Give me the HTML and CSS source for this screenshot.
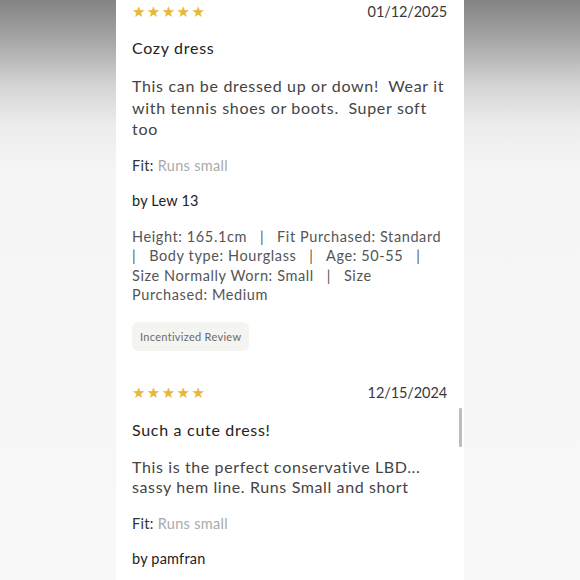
FILE: index.html
```html
<!DOCTYPE html>
<html>
<head>
<meta charset="utf-8">
<link rel="stylesheet" href="styles.css">
</head>
<body>
<div class="page">
  <div class="panel">
    <div class="review">
      <div class="head">
        <span class="stars">★★★★★</span>
        <span class="date">01/12/2025</span>
      </div>
      <div class="title">Cozy dress</div>
      <div class="text">This can be dressed up or down!&nbsp; Wear it<br>with tennis shoes or boots.&nbsp; Super soft<br>too</div>
      <div class="fit"><span class="fit-label">Fit:</span> <span class="fit-value">Runs small</span></div>
      <div class="by">by Lew 13</div>
      <div class="details">Height: 165.1cm &nbsp; | &nbsp; Fit Purchased: Standard<br>| &nbsp; Body type: Hourglass &nbsp; | &nbsp; Age: 50-55 &nbsp; |<br>Size Normally Worn: Small &nbsp; | &nbsp; Size<br>Purchased: Medium</div>
      <div class="badge">Incentivized Review</div>
    </div>
    <div class="review second">
      <div class="head">
        <span class="stars">★★★★★</span>
        <span class="date">12/15/2024</span>
      </div>
      <div class="title">Such a cute dress!</div>
      <div class="text two">This is the perfect conservative LBD...<br>sassy hem line. Runs Small and short</div>
      <div class="fit"><span class="fit-label">Fit:</span> <span class="fit-value">Runs small</span></div>
      <div class="by">by pamfran</div>
    </div>
    <div class="scrollbar"></div>
  </div>
</div>
</body>
</html>
```

FILE: styles.css
```css
html, body {
  margin: 0;
  padding: 0;
}
body {
  width: 580px;
  height: 580px;
  overflow: hidden;
  background: linear-gradient(to bottom, #838383 0px, #a6a6a6 40px, #d4d4d4 85px, #ececec 125px, #f5f5f5 170px, #f8f8f8 580px);
  font-family: Lato, "Open Sans", sans-serif;
}
.page {
  display: flex;
  justify-content: center;
  height: 580px;
}
.panel {
  position: relative;
  width: 348px;
  height: 580px;
  background: #ffffff;
  box-sizing: border-box;
  padding: 0 17px 0 16px;
}
.head {
  display: flex;
  justify-content: space-between;
  align-items: center;
  height: 24px;
}
.stars {
  color: #e6b83a;
  font-size: 15px;
  letter-spacing: 1.4px;
  line-height: 24px;
  font-family: "DejaVu Sans", sans-serif;
}
.date {
  color: #3a3a3a;
  font-size: 14.5px;
  letter-spacing: -0.1px;
  line-height: 24px;
}
.title {
  margin-top: 12px;
  font-size: 16px;
  line-height: 24px;
  color: #222;
  letter-spacing: 0.7px;
}
.text {
  margin-top: 15px;
  font-size: 16px;
  line-height: 21.5px;
  color: #444;
  letter-spacing: 0.68px;
}
.text.two {
  line-height: 20.5px;
  letter-spacing: 0.62px;
}
.fit {
  margin-top: 16px;
  font-size: 14.5px;
  line-height: 20px;
  letter-spacing: 0.3px;
}
.fit-label {
  color: #333;
}
.fit-value {
  color: #aaaaaa;
}
.by {
  margin-top: 15px;
  font-size: 14.5px;
  line-height: 20px;
  color: #222;
  letter-spacing: 0.2px;
}
.details {
  margin-top: 16px;
  font-size: 14.5px;
  line-height: 19.5px;
  color: #555;
  letter-spacing: 0.6px;
}
.badge {
  display: inline-block;
  margin-top: 17px;
  padding: 0 8px;
  height: 29px;
  line-height: 29px;
  background: #f4f4f1;
  border-radius: 6px;
  font-size: 11px;
  color: #6a6a6a;
  letter-spacing: 0.3px;
}
.second {
  margin-top: 30px;
}
.second .title {
  margin-top: 13px;
}
.scrollbar {
  position: absolute;
  left: 343px;
  top: 408px;
  width: 3px;
  height: 39px;
  background: #bdbdbd;
  border-radius: 1px;
}
```
